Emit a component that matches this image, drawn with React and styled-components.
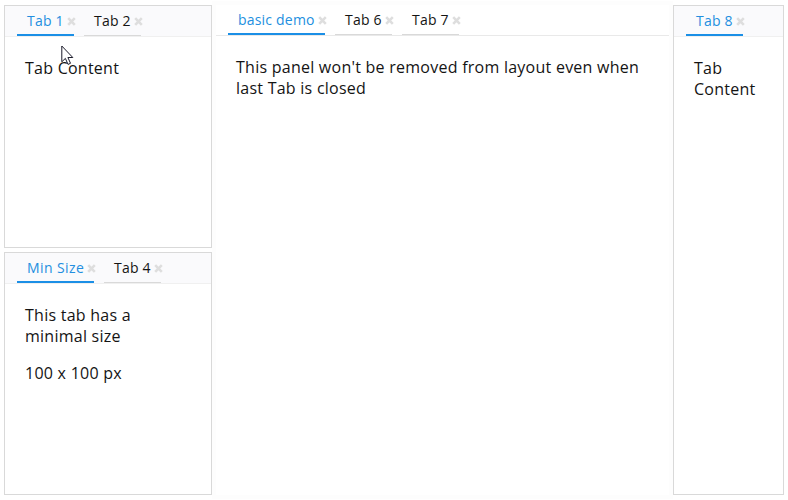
import React from 'react';
import styled, { createGlobalStyle, css } from 'styled-components';

const GlobalStyle = createGlobalStyle`
  * { box-sizing: border-box; }
  body {
    margin: 0;
    background: #fff;
    color: #141414;
    font-family: "Open Sans", "Noto Sans", sans-serif;
  }
`;

const DockLayout = styled.main`
  position: relative;
  display: grid;
  grid-template-columns: 208px 453px 111px;
  column-gap: 4px;
  width: 788px;
  height: 500px;
  padding: 5px 4px;
  overflow: hidden;
`;

const Column = styled.div`
  display: grid;
  grid-template-rows: 243px 243px;
  row-gap: 4px;
`;

const Panel = styled.section`
  min-width: 0;
  height: ${(p) => (p.$tall ? '490px' : '243px')};
  border: ${(p) => (p.$plain ? '0' : '1px solid #d9d9d9')};
  box-shadow: ${(p) => (p.$plain ? '0 0 0 4px #fdfdfd' : 'none')};
  background: #fff;
`;

const TabBar = styled.nav`
  display: flex;
  gap: 10px;
  height: 31px;
  padding: 0 12px;
  border-bottom: 1px solid ${(p) => (p.$plain ? '#e9e9e9' : '#f0f0f0')};
  background: ${(p) => (p.$plain ? '#fff' : '#fafafc')};
`;

const TabButton = styled.div`
  position: relative;
  flex: none;
  width: ${(p) => p.$width}px;
  height: 30px;
  padding-left: 10px;
  border-bottom: 1px solid #d9d9d9;
  font-size: 14px;
  line-height: 30px;
  letter-spacing: ${(p) => p.$spacing}px;
  white-space: nowrap;
  ${(p) => p.$active && css`
    color: #238fe0;
    border-bottom: 2px solid #1b8fe6;
  `}
`;

const CloseIcon = styled.svg`
  position: absolute;
  top: 11px;
  right: -2px;
  width: 9px;
  height: 9px;
  stroke: #dedede;
  stroke-width: 2.6;
`;

const Content = styled.div`
  padding: 21px 20px;
  font-size: 16px;
  line-height: 21px;
  letter-spacing: 0.25px;

  p { margin: 0 0 16px; }
`;

const Line = styled.span`
  display: block;
  white-space: nowrap;
`;

const Pointer = styled.svg`
  position: absolute;
  left: 61px;
  top: 45px;
  width: 13px;
  height: 21px;
`;

function Tab({ label, width = 57, active, spacing = 0.2 }) {
  return (
    <TabButton $width={width} $active={active} $spacing={spacing}>
      {label}
      <CloseIcon viewBox="0 0 9 9"><path d="M1.2 1.2 7.8 7.8M7.8 1.2 1.2 7.8" /></CloseIcon>
    </TabButton>
  );
}

function TabPanel({ tabs, plain, tall, children }) {
  return (
    <Panel $plain={plain} $tall={tall}>
      <TabBar $plain={plain}>
        {tabs.map((tab, i) => <Tab key={tab.label} active={i === 0} {...tab} />)}
      </TabBar>
      <Content>{children}</Content>
    </Panel>
  );
}

export default function App() {
  return (
    <>
      <GlobalStyle />
      <DockLayout>
        <Column>
          <TabPanel tabs={[{ label: 'Tab 1' }, { label: 'Tab 2' }]}>
            <Line>Tab Content</Line>
          </TabPanel>
          <TabPanel tabs={[{ label: 'Min Size', width: 77, spacing: 0.4 }, { label: 'Tab 4' }]}>
            <p>
              <Line>This tab has a</Line>
              <Line>minimal size</Line>
            </p>
            <p><Line>100 x 100 px</Line></p>
          </TabPanel>
        </Column>
        <TabPanel plain tall tabs={[{ label: 'basic demo', width: 97 }, { label: 'Tab 6' }, { label: 'Tab 7' }]}>
          <Line>This panel won't be removed from layout even when</Line>
          <Line>last Tab is closed</Line>
        </TabPanel>
        <TabPanel tall tabs={[{ label: 'Tab 8' }]}>
          <Line>Tab</Line>
          <Line>Content</Line>
        </TabPanel>
        <Pointer viewBox="0 0 13 21">
          <path d="M.8 1v15.8l3.6-3.4 2.6 6 2.5-1.1-2.6-5.8h4.9z" fill="#fff" stroke="#1b1b2b" strokeWidth="1" />
        </Pointer>
      </DockLayout>
    </>
  );
}
